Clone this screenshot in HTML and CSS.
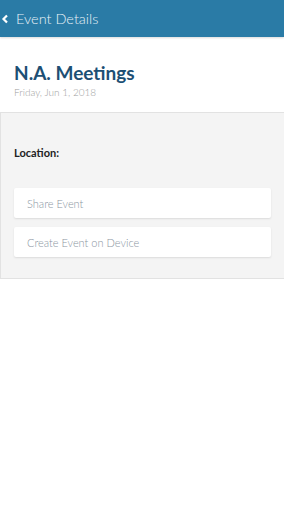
FILE: index.html
```html
<!DOCTYPE html>
<html lang="en">
<head>
  <meta charset="UTF-8">
  <title>Event Details</title>
  <link rel="stylesheet" href="styles.css">
</head>
<body>
  <header class="topbar">
    <svg class="back" width="8" height="10" viewBox="0 0 8 10"><path d="M6 1.5 L2.5 5 L6 8.5" fill="none" stroke="#fff" stroke-width="2.2"/></svg>
    <span class="topbar-title">Event Details</span>
  </header>

  <div class="intro">
    <h1 class="event-name">N.A. Meetings</h1>
    <p class="event-date">Friday, Jun 1, 2018</p>
  </div>

  <section class="panel">
    <p class="location">Location:</p>
    <button class="action">Share Event</button>
    <button class="action">Create Event on Device</button>
  </section>
</body>
</html>
```

FILE: styles.css
```css
body {
  margin: 0;
  font-family: Lato, "Open Sans", sans-serif;
  background: #fff;
}

.topbar {
  height: 37px;
  background: #2a7ba6;
  display: flex;
  align-items: center;
  padding-left: 1px;
  box-shadow: 0 1px 2px rgba(0,0,0,0.15);
}

.back {
  margin-right: 7px;
}

.topbar-title {
  color: #e8f1f7;
  font-size: 14.5px;
  font-weight: 300;
}

.intro {
  padding: 24px 14px 13px;
}

.event-name {
  margin: 0;
  font-size: 19px;
  font-weight: 700;
  color: #1d4f74;
  line-height: 24px;
}

.event-date {
  margin: 0;
  font-size: 10px;
  font-weight: 300;
  color: #a0a0a0;
  line-height: 14px;
}

.panel {
  background: #f4f4f4;
  border: 1px solid #e2e2e2;
  border-right: none;
  padding: 33px 13px 21px;
  display: flex;
  flex-direction: column;
  gap: 9px;
}

.location {
  margin: 0 0 20px;
  font-size: 11px;
  font-weight: 700;
  color: #222;
}

.action {
  height: 30px;
  border: none;
  background: #fff;
  border-radius: 2px;
  box-shadow: 0 1px 2px rgba(0,0,0,0.1);
  text-align: left;
  padding: 0 13px;
  font-family: inherit;
  font-size: 11px;
  font-weight: 300;
  color: #8a95a2;
}
```
